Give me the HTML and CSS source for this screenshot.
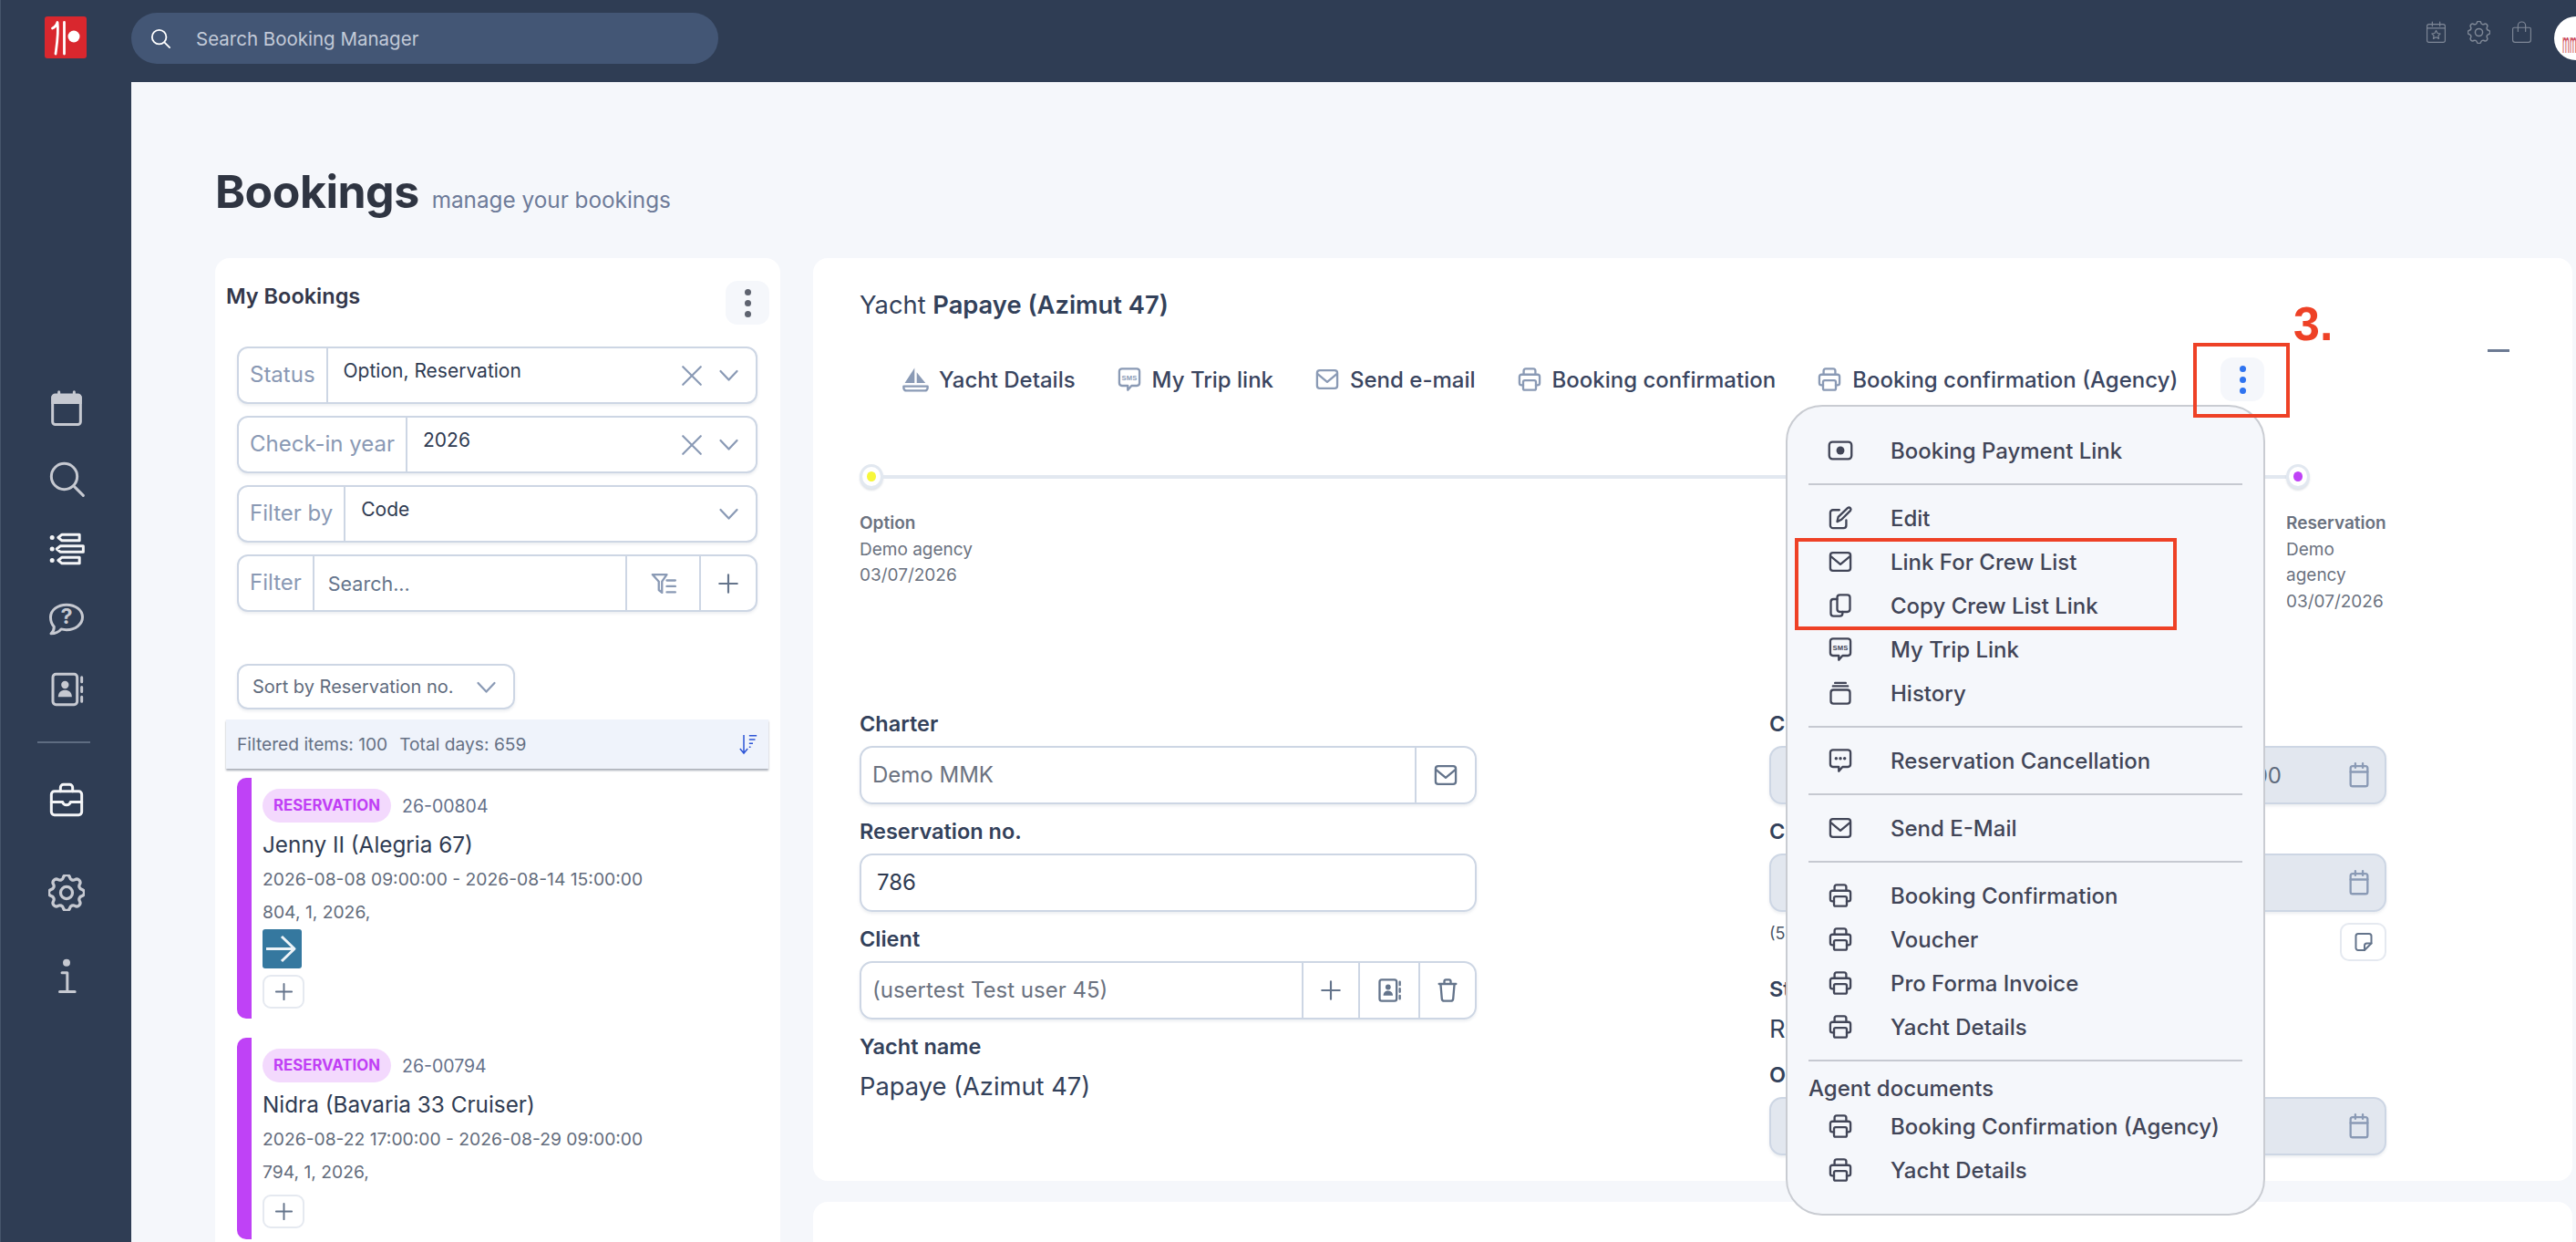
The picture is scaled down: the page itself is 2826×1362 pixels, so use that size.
FILE: index.html
```html
<!DOCTYPE html>
<html lang="en">
<head>
<meta charset="utf-8">
<title>Bookings</title>
<link rel="stylesheet" href="styles.css">
</head>
<body>
<svg class="defs" width="0" height="0" aria-hidden="true">
  <symbol id="i-printer" viewBox="0 0 24 24"><path d="M6.500 7.500V4A2 2 0 0 1 8.500 2h7a2 2 0 0 1 2 2v3.500"/><path d="M6 17.500H4.500A2 2 0 0 1 2.500 15.500v-6a2 2 0 0 1 2-2h15a2 2 0 0 1 2 2v6a2 2 0 0 1-2 2H18"/><rect x="6" y="13" width="12" height="9" rx="1.500"/></symbol>
  <symbol id="i-mail" viewBox="0 0 24 24"><rect x="2.500" y="3.500" width="19" height="17" rx="2.500"/><path d="M3 7l9 7.500L21 7"/></symbol>
  <symbol id="i-sms" viewBox="0 0 24 24"><path d="M5 2h14a2.500 2.500 0 0 1 2.500 2.500v11A2.500 2.500 0 0 1 19 18h-5l-3.500 4v-4H5a2.500 2.500 0 0 1-2.500-2.500v-11A2.500 2.500 0 0 1 5 2z"/><text x="12" y="12.500" class="sms">SMS</text></symbol>
  <symbol id="i-boat" viewBox="0 0 26 24"><path class="solid" d="M12 1L3 15h9zM14 5v10h8z"/><path d="M2 18h22v1.500a2.500 2.500 0 0 1-2.500 2.500h-17A2.500 2.500 0 0 1 2 19.500z"/></symbol>
  <symbol id="i-edit" viewBox="0 0 24 24"><path d="M11 4.500H5A2.500 2.500 0 0 0 2.500 7v12A2.500 2.500 0 0 0 5 21.500h10a2.500 2.500 0 0 0 2.500-2.500v-5"/><path d="M9 15.500l1-4.500L19 2.500a1.800 1.800 0 0 1 2.500 2.500L13 13.500z"/></symbol>
  <symbol id="i-copy" viewBox="0 0 24 24"><path d="M9 6H5.500A2.500 2.500 0 0 0 3 8.500v11A2.500 2.500 0 0 0 5.500 22h6a2.500 2.500 0 0 0 2.500-2.500V18"/><rect x="9" y="2" width="12" height="16" rx="2.500"/></symbol>
  <symbol id="i-history" viewBox="0 0 24 24"><rect x="3" y="9" width="18" height="13" rx="2.500"/><path d="M5 5.500h14M7 2.500h10"/></symbol>
  <symbol id="i-chat" viewBox="0 0 24 24"><path d="M5 2h14a2.500 2.500 0 0 1 2.500 2.500v11A2.500 2.500 0 0 1 19 18h-5l-3.500 4v-4H5a2.500 2.500 0 0 1-2.500-2.500v-11A2.500 2.500 0 0 1 5 2z"/><path class="dots" d="M8 10h.01M12 10h.01M16 10h.01"/></symbol>
  <symbol id="i-money" viewBox="0 0 24 24"><rect x="1.500" y="4" width="21" height="16" rx="3"/><circle class="solid" cx="12" cy="12" r="3.800"/></symbol>
  <symbol id="i-cal" viewBox="0 0 24 24"><rect x="4" y="3.500" width="16" height="19" rx="2"/><path d="M4 9h16M8.500 1v4M15.500 1v4"/></symbol>
  <symbol id="i-contact" viewBox="0 0 24 24"><rect x="3" y="2" width="16" height="20" rx="2"/><circle class="solid" cx="11" cy="9" r="2.500"/><path class="solid" d="M6.500 17c0-3 2-4.500 4.500-4.500s4.500 1.500 4.500 4.500z"/><path d="M22 4v3M22 10.500v3M22 17v3"/></symbol>
  <symbol id="i-trash" viewBox="0 0 24 24"><path d="M4 6h16M9 6V3.500A1.500 1.500 0 0 1 10.500 2h3A1.500 1.500 0 0 1 15 3.500V6M5.500 6l1.200 14a2.200 2.200 0 0 0 2.200 2h6.200a2.200 2.200 0 0 0 2.200-2l1.200-14"/></symbol>
  <symbol id="i-plus" viewBox="0 0 24 24"><path d="M12 3v18M3 12h18"/></symbol>
  <symbol id="i-chev" viewBox="0 0 24 24"><path d="M4 8l8 8.500L20 8"/></symbol>
  <symbol id="i-x" viewBox="0 0 24 24"><path d="M3 3l18 18M21 3L3 21"/></symbol>
  <symbol id="i-filter" viewBox="0 0 24 24"><path d="M1.500 3.500H15L10.500 10v10.500l-3-2.500v-8z"/><path d="M15 9h8M15 14.500h8M15 20h8"/></symbol>
  <symbol id="i-note" viewBox="0 0 24 24"><path d="M13 21H6a2.500 2.500 0 0 1-2.500-2.500v-13A2.500 2.500 0 0 1 6 3h12a2.500 2.500 0 0 1 2.500 2.500V13.500z"/><path d="M20.500 13.500h-5A2.500 2.500 0 0 0 13 16v5"/></symbol>
  <symbol id="i-gear" viewBox="2.800 2.800 18.400 18.400"><path d="M10.325 4.317c.426 -1.756 2.924 -1.756 3.35 0a1.724 1.724 0 0 0 2.573 1.066c1.543 -.94 3.31 .826 2.37 2.37a1.724 1.724 0 0 0 1.065 2.572c1.756 .426 1.756 2.924 0 3.35a1.724 1.724 0 0 0 -1.066 2.573c.94 1.543 -.826 3.31 -2.37 2.37a1.724 1.724 0 0 0 -2.572 1.065c-.426 1.756 -2.924 1.756 -3.35 0a1.724 1.724 0 0 0 -2.573 -1.066c-1.543 .94 -3.31 -.826 -2.37 -2.37a1.724 1.724 0 0 0 -1.065 -2.572c-1.756 -.426 -1.756 -2.924 0 -3.35a1.724 1.724 0 0 0 1.066 -2.573c-.94 -1.543 .826 -3.31 2.37 -2.37c1 .608 2.296 .07 2.572 -1.065z"/><circle cx="12" cy="12" r="3"/></symbol>
  <symbol id="i-search" viewBox="0 0 24 24"><circle cx="10.500" cy="10.500" r="8.500"/><path d="M17 17l6 6"/></symbol>
</svg>

<div class="app">
  <aside class="sidebar">
    <svg class="logo" viewBox="0 0 46 46"><rect width="46" height="46" rx="3" class="logo-bg"/><path class="logo-line" d="M8.500 13C11 12 13 9.500 14 6.500 15.500 18 13.500 30 12 41M21.500 6.500V41"/><circle cx="32" cy="22" r="6.500" class="logo-dot"/></svg>
    <nav class="side-nav">
      <svg class="side-ic" viewBox="0 0 24 24"><path class="solid" d="M4 3h16a2 2 0 0 1 2 2v4H2V5a2 2 0 0 1 2-2z"/><path d="M7 1v3M17 1v3"/><rect x="2.800" y="3" width="18.400" height="19.500" rx="1.800"/></svg>
      <svg class="side-ic"><use href="#i-search"/></svg>
      <svg class="side-ic bright" viewBox="0 0 24 24"><path class="dots" d="M2.500 4.500h.01M2.500 12h.01M2.500 19.500h.01"/><path d="M9 2.500h11.500v4H9L6.500 4.500zM8 10h15v4H8l-2.500-2zM9 17.500h11.500v4H9l-2.500-2z"/></svg>
      <svg class="side-ic" viewBox="0 0 24 24"><path d="M12 2.500c6 0 10.500 3.700 10.500 8.200S18 19 12 19c-1.200 0-2.400-.15-3.500-.45C6.500 21 4 21.500 1.800 21.500c1.400-1.200 2-2.700 2-4.500-1.500-1.500-2.300-3.600-2.300-6.300C1.500 6.200 6 2.500 12 2.500z"/><text x="12" y="15" class="q">?</text></svg>
      <svg class="side-ic"><use href="#i-contact"/></svg>
      <div class="side-rule"></div>
      <svg class="side-ic bright case" viewBox="0 0 24 24"><rect x="2" y="6.500" width="20" height="15.500" rx="2"/><path d="M8 6.500V4a2 2 0 0 1 2-2h4a2 2 0 0 1 2 2v2.500M2 13.500h7.500a2.500 2 0 0 0 5 0H22"/></svg>
      <svg class="side-ic gear"><use href="#i-gear"/></svg>
      <svg class="side-ic info" viewBox="0 0 24 24"><circle class="solid" cx="12" cy="3.500" r="2.400"/><path d="M9 10h3.500v12M7.500 22.500h10"/></svg>
    </nav>
  </aside>

  <header class="topbar">
    <div class="global-search"><svg class="ic ic-search white"><use href="#i-search"/></svg><span>Search Booking Manager</span></div>
    <div class="top-icons">
      <svg class="top-ic" viewBox="0 0 24 24"><rect x="2.500" y="3.500" width="19" height="19" rx="2"/><path d="M2.500 7.500h19M8 1v4.500M16 1v4.500M12 10l1.500 3 3 .4-2.200 2.100.6 3.100-2.900-1.500-2.900 1.500.6-3.100-2.200-2.100 3-.4z"/></svg>
      <svg class="top-ic"><use href="#i-gear"/></svg>
      <svg class="top-ic" viewBox="0 0 24 24"><path d="M4 7h16a1.500 1.500 0 0 1 1.500 1.500V20a2.500 2.500 0 0 1-2.500 2.500H5A2.500 2.500 0 0 1 2.500 20V8.500A1.500 1.500 0 0 1 4 7zM8 11V5a4 4 0 0 1 8 0v6"/></svg>
    </div>
    <div class="avatar"><span>mmm</span></div>
  </header>

  <main class="main">
    <div class="page-head">
      <h1>Bookings</h1>
      <span class="page-sub">manage your bookings</span>
    </div>
    <div class="columns">
      <section class="list-card">
        <div class="list-head">
          <h2>My Bookings</h2>
          <button class="kebab"><i></i><i></i><i></i></button>
        </div>
        <div class="filters">
          <div class="group"><label class="g-label">Status</label><div class="g-value"><span class="g-text">Option, Reservation</span><svg class="ic ic-x slate"><use href="#i-x"/></svg><svg class="ic ic-chev slate"><use href="#i-chev"/></svg></div></div>
          <div class="group"><label class="g-label">Check-in year</label><div class="g-value"><span class="g-text">2026</span><svg class="ic ic-x slate"><use href="#i-x"/></svg><svg class="ic ic-chev slate"><use href="#i-chev"/></svg></div></div>
          <div class="group"><label class="g-label">Filter by</label><div class="g-value"><span class="g-text">Code</span><svg class="ic ic-chev slate"><use href="#i-chev"/></svg></div></div>
          <div class="group"><label class="g-label">Filter</label><div class="g-value g-search"><span class="g-placeholder">Search...</span></div><div class="g-btn wide"><svg class="ic ic-24 slate"><use href="#i-filter"/></svg></div><div class="g-btn"><svg class="ic ic-plus slate-d"><use href="#i-plus"/></svg></div></div>
        </div>
        <div class="sort"><span>Sort by Reservation no.</span><svg class="ic ic-chev slate"><use href="#i-chev"/></svg></div>
        <div class="stats">
          <span>Filtered items: 100</span><span>Total days: 659</span>
          <svg class="sort-ic" viewBox="0 0 24 28"><path d="M6 2v23M1 20l5 6 5-6M13 3h10M13 8h8M13 13h5M13 18h2"/></svg>
        </div>
        <article class="booking">
          <div class="b-top"><span class="badge">RESERVATION</span><span class="b-no">26-00804</span></div>
          <div class="b-title">Jenny II (Alegria 67)</div>
          <div class="b-line b-dates">2026-08-08 09:00:00 - 2026-08-14 15:00:00</div>
          <div class="b-line">804, 1, 2026,</div>
          <div class="b-arrow"><svg viewBox="0 0 43 43"><path d="M4 21.500h30M21 8l14 13.500L21 35"/></svg></div>
          <button class="b-plus"><svg class="ic ic-small-plus slate-d"><use href="#i-plus"/></svg></button>
        </article>
        <article class="booking compact">
          <div class="b-top"><span class="badge">RESERVATION</span><span class="b-no">26-00794</span></div>
          <div class="b-title">Nidra (Bavaria 33 Cruiser)</div>
          <div class="b-line b-dates">2026-08-22 17:00:00 - 2026-08-29 09:00:00</div>
          <div class="b-line">794, 1, 2026,</div>
          <button class="b-plus"><svg class="ic ic-small-plus slate-d"><use href="#i-plus"/></svg></button>
        </article>
      </section>

      <div class="detail-col">
        <section class="detail-card">
          <div class="yacht-title">Yacht <b>Papaye (Azimut 47)</b></div>
          <div class="toolbar">
            <a class="tool"><svg class="ic ic-boat slate"><use href="#i-boat"/></svg>Yacht Details</a>
            <a class="tool"><svg class="ic ic-24 slate"><use href="#i-sms"/></svg>My Trip link</a>
            <a class="tool"><svg class="ic ic-24 slate"><use href="#i-mail"/></svg>Send e-mail</a>
            <a class="tool"><svg class="ic ic-24 slate"><use href="#i-printer"/></svg>Booking confirmation</a>
            <a class="tool"><svg class="ic ic-24 slate"><use href="#i-printer"/></svg>Booking confirmation (Agency)</a>
            <button class="kebab blue"><i></i><i></i><i></i></button>
          </div>
          <span class="collapse"></span>
          <div class="track"><span class="node"><i class="dot yellow"></i></span><span class="track-line"></span><span class="node"><i class="dot purple"></i></span></div>
          <div class="steps">
            <div class="step"><b>Option</b><span>Demo agency</span><span>03/07/2026</span></div>
            <div class="step last"><b>Reservation</b><span>Demo agency</span><span>03/07/2026</span></div>
          </div>
          <div class="form">
            <div class="form-col">
              <div class="field"><label>Charter</label><div class="input"><span class="in-text muted">Demo MMK</span><span class="in-btn"><svg class="ic ic-24 slate-d"><use href="#i-mail"/></svg></span></div></div>
              <div class="field"><label>Reservation no.</label><div class="input"><span class="in-text strong">786</span></div></div>
              <div class="field"><label>Client</label><div class="input"><span class="in-text muted">(usertest Test user 45)</span><span class="in-btn w62"><svg class="ic ic-plus slate-d"><use href="#i-plus"/></svg></span><span class="in-btn w66"><svg class="ic ic-24 slate-d"><use href="#i-contact"/></svg></span><span class="in-btn w62"><svg class="ic ic-24 slate-d"><use href="#i-trash"/></svg></span></div></div>
              <div class="field-plain"><label>Yacht name</label><div class="plain-value">Papaye (Azimut 47)</div></div>
            </div>
            <div class="form-col">
              <div class="field"><label>Check-in</label><div class="input disabled"><span class="in-text end">2026-08-01 17:00:00</span><svg class="ic ic-24 slate"><use href="#i-cal"/></svg></div></div>
              <div class="field tight"><label>Check-out</label><div class="input disabled"><svg class="ic ic-24 slate"><use href="#i-cal"/></svg></div></div>
              <div class="note-row"><span>(5 days)</span><button class="note-btn"><svg class="ic ic-note slate-d"><use href="#i-note"/></svg></button></div>
              <div class="field-plain status"><label>Status</label><div class="plain-value">Reservation</div></div>
              <div class="field last-field"><label>Option until</label><div class="input disabled"><svg class="ic ic-24 slate"><use href="#i-cal"/></svg></div></div>
            </div>
          </div>

          <div class="menu">
            <a class="m-item"><svg class="ic ic-24"><use href="#i-money"/></svg>Booking Payment Link</a>
            <hr>
            <a class="m-item"><svg class="ic ic-24"><use href="#i-edit"/></svg>Edit</a>
            <a class="m-item"><svg class="ic ic-24"><use href="#i-mail"/></svg>Link For Crew List</a>
            <a class="m-item"><svg class="ic ic-24"><use href="#i-copy"/></svg>Copy Crew List Link</a>
            <a class="m-item"><svg class="ic ic-24"><use href="#i-sms"/></svg>My Trip Link</a>
            <a class="m-item"><svg class="ic ic-24"><use href="#i-history"/></svg>History</a>
            <hr>
            <a class="m-item"><svg class="ic ic-24"><use href="#i-chat"/></svg>Reservation Cancellation</a>
            <hr>
            <a class="m-item"><svg class="ic ic-24"><use href="#i-mail"/></svg>Send E-Mail</a>
            <hr>
            <a class="m-item"><svg class="ic ic-24"><use href="#i-printer"/></svg>Booking Confirmation</a>
            <a class="m-item"><svg class="ic ic-24"><use href="#i-printer"/></svg>Voucher</a>
            <a class="m-item"><svg class="ic ic-24"><use href="#i-printer"/></svg>Pro Forma Invoice</a>
            <a class="m-item"><svg class="ic ic-24"><use href="#i-printer"/></svg>Yacht Details</a>
            <hr>
            <div class="m-head">Agent documents</div>
            <a class="m-item"><svg class="ic ic-24"><use href="#i-printer"/></svg>Booking Confirmation (Agency)</a>
            <a class="m-item"><svg class="ic ic-24"><use href="#i-printer"/></svg>Yacht Details</a>
          </div>
        </section>
        <section class="detail-card second"></section>
      </div>
    </div>
  </main>

  <div class="mark mark-kebab"></div>
  <div class="mark mark-crew"></div>
  <div class="mark-label">3.</div>
</div>
</body>
</html>
```

FILE: styles.css
```css
* { box-sizing: border-box; }
html, body { margin: 0; padding: 0; }
body { width: 2826px; height: 1362px; overflow: hidden; font-family: Inter, "Liberation Sans", sans-serif; color: #2f3b52; background: #f5f7fb; }
.defs { position: absolute; }
h1, h2 { margin: 0; }
button { font: inherit; padding: 0; cursor: pointer; }

svg { fill: none; stroke: currentColor; stroke-width: 2; stroke-linecap: round; stroke-linejoin: round; }
.solid { fill: currentColor; stroke: none; }
.dots { stroke-width: 3; }
.sms { font: 700 6.500px "Liberation Sans", sans-serif; text-anchor: middle; fill: currentColor; stroke: none; letter-spacing: .2px; }
.q { font: 700 14px Inter, sans-serif; text-anchor: middle; fill: currentColor; stroke: none; }
.ic { flex: none; display: block; }
.ic-24 { width: 28px; height: 28px; margin: -2px; }
.ic-search { width: 22px; height: 22px; }
.ic-x { width: 26px; height: 26px; }
.ic-chev { width: 27px; height: 27px; }
.ic-plus { width: 26px; height: 26px; }
.ic-small-plus { width: 23px; height: 23px; }
.ic-note { width: 24px; height: 24px; }
.ic-boat { width: 31px; height: 29px; margin: -2.500px; }
.white { color: #fff; }
.slate { color: #8a9ab5; }
.slate-d { color: #64748b; }

.app { position: relative; display: grid; grid-template-columns: 144px 1fr; grid-template-rows: 90px 1fr; width: 2826px; height: 1362px; }

/* sidebar */
.sidebar { grid-row: 1 / 3; background: #2f3d54; border-left: 1px solid #46556b; display: flex; flex-direction: column; align-items: center; padding-top: 18px; }
.logo { width: 46px; height: 46px; stroke: none; margin-left: -1px; }
.logo-bg { fill: #d9272e; }
.logo-line { stroke: #fff; stroke-width: 2.800; fill: none; }
.logo-dot { fill: #fff; }
.side-nav { display: flex; flex-direction: column; align-items: center; margin-top: 364px; color: #c6c9d1; }
.side-ic { width: 40px; height: 40px; margin-bottom: 37px; stroke-width: 1.800; }
.side-ic.bright { color: #f4f5f7; }
.side-ic.case { margin-bottom: 62px; }
.side-ic.gear { stroke-width: 1.500; margin-bottom: 51px; }
.side-rule { width: 58px; height: 2px; background: #5e6c81; margin: 0 0 42px -6px; }

/* top bar */
.topbar { background: #2f3d54; display: flex; align-items: flex-start; padding-top: 14px; position: relative; overflow: hidden; }
.global-search { width: 644px; height: 56px; border-radius: 28px; background: #435675; display: flex; align-items: center; padding-left: 21px; gap: 28px; color: #c2cad8; font-size: 20.500px; }
.top-icons { margin: 9px 47px 0 auto; display: flex; gap: 22px; color: #7f8897; }
.top-ic { width: 25px; height: 25px; stroke-width: 1.100; }
.avatar { position: absolute; left: 2658px; top: 18px; width: 48px; height: 48px; border-radius: 50%; background: #fff; overflow: hidden; }
.avatar span { display: block; margin: 13px 0 0 9px; font-size: 9px; line-height: 10px; color: #c9404f; transform: scaleY(3.400); transform-origin: top left; white-space: nowrap; }

/* main */
.main { background: #f5f7fb; padding: 0 4px 0 92px; min-width: 0; }
.page-head { height: 193px; display: flex; align-items: baseline; gap: 14px; padding-top: 87px; }
.page-head h1 { font-size: 50px; line-height: 66px; font-weight: 700; color: #2f3542; letter-spacing: -.5px; }
.page-sub { font-size: 24.300px; color: #6e7b99; }
.columns { display: grid; grid-template-columns: 620px 1fr; gap: 36px; align-items: start; }

/* list card */
.list-card { background: #fff; border-radius: 16px 16px 0 0; height: 1079px; padding: 25px 12px 0; overflow: hidden; }
.list-head { display: flex; justify-content: space-between; align-items: flex-start; }
.list-head h2 { font-size: 23.500px; line-height: 34px; font-weight: 600; color: #33374a; }
.kebab { width: 48px; height: 48px; border: 0; border-radius: 13px; background: #f5f7fb; display: flex; flex-direction: column; align-items: center; justify-content: center; gap: 5px; }
.kebab i { width: 7px; height: 7px; border-radius: 50%; background: #5f6470; }
.kebab.blue i { background: #2f74f0; }
.filters { margin: 24px 13px 0 12px; display: grid; gap: 13px; }
.group { display: flex; height: 63px; border: 2.500px solid #cdd6e4; border-radius: 12px; box-shadow: 0 2px 3px rgba(100,116,139,.12); background: #fff; overflow: hidden; }
.g-label { font-size: 24px; color: #8a99b4; padding: 0 12px; line-height: 58px; border-right: 2.500px solid #cdd6e4; white-space: nowrap; }
.g-value { flex: 1; display: flex; align-items: center; padding: 0 16px 0 17px; gap: 14.500px; min-width: 0; }
.g-text { flex: 1; font-size: 21px; color: #2f3b52; margin-top: -11px; }
.g-search { padding-left: 15px; }
.g-placeholder { font-size: 21.500px; color: #64748b; }
.g-btn { flex: none; width: 62px; display: flex; align-items: center; justify-content: center; border-left: 2.500px solid #cdd6e4; }
.g-btn.wide { width: 81px; }
.sort { margin: 57px 0 0 12px; width: 305px; height: 50px; border: 2.500px solid #cdd6e4; border-radius: 12px; box-shadow: 0 2px 3px rgba(100,116,139,.12); display: flex; align-items: center; justify-content: space-between; padding: 0 16px 0 15px; font-size: 20px; color: #5f6b7d; }
.stats { margin-top: 11px; width: 595px; height: 54px; background: #eff3fb; box-shadow: 0 2px 2px rgba(60,70,90,.45); display: flex; align-items: center; padding: 0 12px; gap: 13px; font-size: 19.200px; color: #657084; }
.sort-ic { width: 20px; height: 28px; margin-left: auto; color: #2d55d6; stroke-width: 1.800; stroke-linecap: butt; stroke-linejoin: miter; }
.booking { margin: 10px 0 21px 12px; height: 264px; border-left: 16px solid #bf42f6; border-radius: 10px 0 0 10px; padding: 12px 0 0 12px; }
.booking + .booking { margin-top: 21px; }
.booking.compact { height: 221px; }
.b-top { display: flex; align-items: center; gap: 12px; height: 37px; }
.badge { width: 141px; height: 37px; border-radius: 19px; background: #f3d9fd; color: #c03ff5; font-size: 16.800px; font-weight: 700; line-height: 37px; text-align: center; }
.b-no { font-size: 19.500px; color: #64708a; }
.b-title { margin-top: 6px; font-size: 24.300px; line-height: 36px; color: #2f3b52; }
.b-line { font-size: 19.300px; line-height: 36px; color: #636c7c; }
.b-dates { margin-top: 2px; }
.b-arrow { width: 43px; height: 43px; margin-top: 1px; background: #35789f; border-radius: 3px; color: #eef4f8; }
.b-arrow svg { display: block; width: 43px; height: 43px; stroke-width: 3; stroke-linecap: butt; }
.b-plus { display: flex; align-items: center; justify-content: center; width: 46px; height: 37px; margin-top: 7px; background: #fff; border: 2px solid #e5e9f0; border-radius: 9px; }

/* detail */
.detail-col { display: flex; flex-direction: column; gap: 23px; }
.detail-card { position: relative; background: #fff; border-radius: 16px; height: 1012px; padding: 35px 0 0 51px; }
.detail-card.second { height: 100px; padding: 0; }
.yacht-title { font-size: 27.300px; line-height: 34px; color: #33415a; }
.yacht-title b { font-weight: 600; }
.toolbar { display: flex; align-items: center; gap: 47px; margin: 40px 0 0 48px; height: 48px; }
.tool { display: flex; align-items: center; gap: 13px; font-size: 24px; font-weight: 500; color: #3a4560; white-space: nowrap; }
.collapse { position: absolute; left: 1837px; top: 100px; width: 24px; height: 3px; background: #6c7a93; }
.track { display: flex; align-items: center; width: 1591px; margin-top: 69px; }
.node { flex: none; width: 26px; height: 27px; border-radius: 50%; background: #fff; border: 3px solid #e2e8f0; box-shadow: 0 2px 2px rgba(100,116,139,.2); display: flex; align-items: center; justify-content: center; }
.dot { width: 10px; height: 11px; border-radius: 50%; }
.dot.yellow { background: #f7f73a; }
.dot.purple { background: #bf42f6; }
.track-line { flex: 1; height: 4px; background: #e2e8f0; }
.steps { display: flex; justify-content: space-between; width: 1675px; margin-top: 24px; height: 218px; }
.step { display: flex; flex-direction: column; width: 140px; font-size: 19px; line-height: 28.500px; color: #6b7280; }
.step b { font-size: 19px; font-weight: 600; }
.step.last { width: 110px; }
.form { display: grid; grid-template-columns: 677px 677px; gap: 321px; }
.field { margin-bottom: 14px; }
.field label, .field-plain label { display: block; font-size: 23.500px; font-weight: 600; line-height: 32px; margin-bottom: 8px; color: #33415a; }
.input { display: flex; align-items: stretch; height: 64px; border: 2.500px solid #cdd6e4; border-radius: 14px; box-shadow: 0 2px 3px rgba(100,116,139,.12); overflow: hidden; }
.in-text { flex: 1; font-size: 24px; line-height: 59px; padding-left: 12px; }
.in-text.muted { color: #6b7280; }
.in-text.strong { padding-left: 17px; color: #2f3b52; }
.in-btn { flex: none; width: 66px; display: flex; align-items: center; justify-content: center; border-left: 2.500px solid #cdd6e4; }
.in-btn.w62 { width: 62px; }
.in-btn.w66 { width: 66px; }
.input.disabled { background: #e2e7ef; align-items: center; justify-content: flex-end; padding-right: 16px; }
.in-text.end { text-align: right; padding-right: 73px; color: #5f6b7d; }
.field-plain label { margin-bottom: 10px; }
.plain-value { font-size: 27.300px; line-height: 36px; color: #33415a; }
.tight { margin-bottom: 0; }
.note-row { display: flex; justify-content: space-between; align-items: flex-start; height: 54px; padding-top: 12px; font-size: 18px; line-height: 24px; color: #4d5768; }
.note-btn { display: flex; align-items: center; justify-content: center; width: 51px; height: 42px; background: #fff; border: 2px solid #e5e9f0; border-radius: 10px; }
.status { margin-top: 15px; }
.last-field { margin-top: 16px; }

/* popup */
.menu { position: absolute; z-index: 3; left: 1067px; top: 161px; width: 526px; height: 889px; background: #f5f7fb; border: 2px solid #c9ccd2; border-radius: 40px; padding: 24px 23px 0; }
.menu hr { height: 2px; border: 0; background: #c6c9d1; margin: 12px 0; }
.m-item { display: flex; align-items: center; height: 48px; padding-left: 23px; gap: 43px; font-size: 24px; font-weight: 500; color: #414557; }
.m-item .ic { color: #414557; }
.m-head { font-size: 24px; line-height: 35px; font-weight: 500; color: #414557; }

/* annotations */
.mark { position: absolute; z-index: 5; border: 4px solid #ee4126; }
.mark-kebab { left: 2406px; top: 376px; width: 106px; height: 82px; }
.mark-crew { left: 1969px; top: 590px; width: 419px; height: 101px; }
.mark-label { position: absolute; z-index: 5; left: 2516px; top: 327px; font: 700 52px/56px "Liberation Sans", sans-serif; color: #ee4126; }
```
